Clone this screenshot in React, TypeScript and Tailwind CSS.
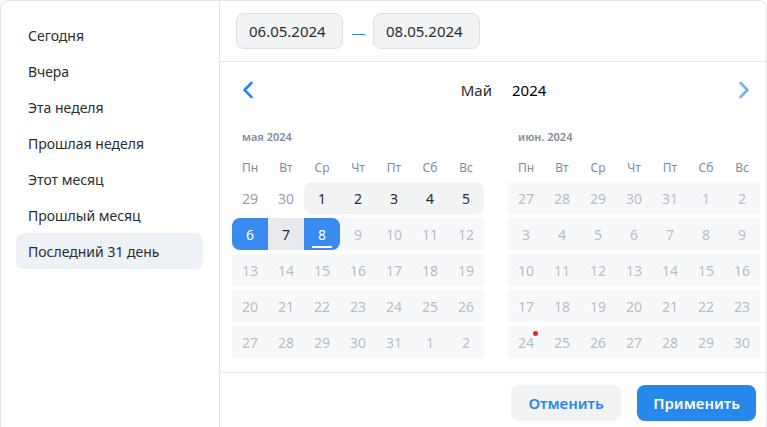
import React from 'react';

const presets = ['Сегодня', 'Вчера', 'Эта неделя', 'Прошлая неделя', 'Этот месяц', 'Прошлый месяц', 'Последний 31 день'];
const weekdays = ['Пн', 'Вт', 'Ср', 'Чт', 'Пт', 'Сб', 'Вс'];

type Cell = { d: number; kind: 'prev' | 'active' | 'start' | 'mid' | 'end' | 'off'; dot?: boolean };

const mayRows: Cell[][] = [
  [
    { d: 29, kind: 'prev' },
    { d: 30, kind: 'prev' },
    { d: 1, kind: 'active' },
    { d: 2, kind: 'active' },
    { d: 3, kind: 'active' },
    { d: 4, kind: 'active' },
    { d: 5, kind: 'active' },
  ],
  [
    { d: 6, kind: 'start' },
    { d: 7, kind: 'mid' },
    { d: 8, kind: 'end' },
    ...[9, 10, 11, 12].map((d) => ({ d, kind: 'off' as const })),
  ],
  [13, 14, 15, 16, 17, 18, 19].map((d) => ({ d, kind: 'off' as const })),
  [20, 21, 22, 23, 24, 25, 26].map((d) => ({ d, kind: 'off' as const })),
  [27, 28, 29, 30, 31, 1, 2].map((d) => ({ d, kind: 'off' as const })),
];

const juneRows: Cell[][] = [
  [27, 28, 29, 30, 31, 1, 2],
  [3, 4, 5, 6, 7, 8, 9],
  [10, 11, 12, 13, 14, 15, 16],
  [17, 18, 19, 20, 21, 22, 23],
  [24, 25, 26, 27, 28, 29, 30],
].map((r) => r.map((d, i) => ({ d, kind: 'off' as const, dot: d === 24 && i === 0 })));

function DayCell({ cell }: { cell: Cell }) {
  let cls = 'relative flex h-8 items-center justify-center text-[14px] ';
  if (cell.kind === 'prev') cls += 'text-[#99a2ad]';
  if (cell.kind === 'active') {
    cls += 'bg-[#f2f3f5] text-[#2c2d2e] ';
    if (cell.d === 1) cls += 'rounded-l-lg ';
    if (cell.d === 5) cls += 'rounded-r-lg ';
  }
  if (cell.kind === 'start') cls += 'bg-[#3a8bf0] text-white rounded-l-lg';
  if (cell.kind === 'mid') cls += 'bg-[#e8eaee] text-[#2c2d2e]';
  if (cell.kind === 'end') cls += 'bg-[#3a8bf0] text-white rounded-r-lg';
  if (cell.kind === 'off') cls += 'bg-[#f7f8fa] text-[#b8bec6]';
  return (
    <div className={cls}>
      <span className="relative">
        {cell.d}
        {cell.kind === 'end' && <span className="absolute -bottom-[3px] left-[-6px] right-[-6px] h-[2px] bg-white" />}
        {cell.dot && <span className="absolute -top-[1px] -right-[4px] h-[5px] w-[5px] rounded-full bg-[#e02a2a]" />}
      </span>
    </div>
  );
}

function Month({ title, rows }: { title: string; rows: Cell[][] }) {
  return (
    <div className="w-[252px]">
      <div className="h-[14px] pl-[10px] text-[11px] font-semibold leading-[14px] text-[#818c99]">{title}</div>
      <div className="mt-[10px] grid h-[28px] grid-cols-7 items-center text-center text-[12px] text-[#818c99]">
        {weekdays.map((w) => (
          <div key={w}>{w}</div>
        ))}
      </div>
      <div className="flex flex-col gap-1">
        {rows.map((row, ri) => (
          <div key={ri} className="grid grid-cols-7">
            {row.map((c, ci) => (
              <DayCell key={ci} cell={c} />
            ))}
          </div>
        ))}
      </div>
    </div>
  );
}

export default function App() {
  return (
    <div className="h-[427px] w-[767px] overflow-hidden bg-white font-['Noto_Sans',sans-serif]">
      <div className="flex h-[460px] w-[767px] rounded-lg border border-[#e3e5e8]">
        <div className="w-[219px] shrink-0 border-r border-[#e3e5e8] pt-4 pl-[15px] pr-4">
          {presets.map((p, i) => (
            <div
              key={p}
              className={
                'flex h-9 items-center rounded-lg px-3 text-[14px] text-[#2c2d2e] ' +
                (i === presets.length - 1 ? 'bg-[#eef1f5]' : '')
              }
            >
              {p}
            </div>
          ))}
        </div>

        <div className="flex flex-1 flex-col">
          <div className="flex h-[61px] items-center border-b border-[#e3e5e8] pl-4">
            <div className="flex h-9 w-[107px] items-center rounded-lg border border-[#dce1e6] bg-[#f2f3f5] pl-3 text-[15px] text-[#2c2d2e]">
              06.05.2024
            </div>
            <span className="ml-[9px] mr-[8px] mt-[7px] h-px w-[13px] bg-[#2688eb]" />
            <div className="flex h-9 w-[107px] items-center rounded-lg border border-[#dce1e6] bg-[#f2f3f5] pl-3 text-[15px] text-[#2c2d2e]">
              08.05.2024
            </div>
          </div>

          <div className="flex h-[56px] items-center pl-4 pr-[10px]">
            <svg width="24" height="24" viewBox="0 0 24 24" fill="none">
              <path d="M15.5 5 8.5 12l7 7" stroke="#2688eb" strokeWidth="2.6" strokeLinecap="round" strokeLinejoin="round" />
            </svg>
            <div className="flex flex-1 items-center justify-center gap-5 pl-[15px] text-[15px]">
              <span className="text-[#2c2d2e]">Май</span>
              <span className="text-black">2024</span>
            </div>
            <svg width="24" height="24" viewBox="0 0 24 24" fill="none">
              <path d="M8.5 5l7 7-7 7" stroke="#7ab2ef" strokeWidth="2.6" strokeLinecap="round" strokeLinejoin="round" />
            </svg>
          </div>

          <div className="flex gap-6 pt-3 pb-[14px] pl-3">
            <Month title="мая 2024" rows={mayRows} />
            <Month title="июн. 2024" rows={juneRows} />
          </div>

          <div className="flex justify-end gap-4 border-t border-[#e3e5e8] pt-3 pr-[10px]">
            <button className="h-9 w-[110px] rounded-lg bg-[#f2f3f5] text-[15px] font-semibold text-[#2688eb]">
              Отменить
            </button>
            <button className="h-9 w-[119px] rounded-lg bg-[#2688eb] text-[15px] font-semibold text-white">
              Применить
            </button>
          </div>
        </div>
      </div>
    </div>
  );
}
